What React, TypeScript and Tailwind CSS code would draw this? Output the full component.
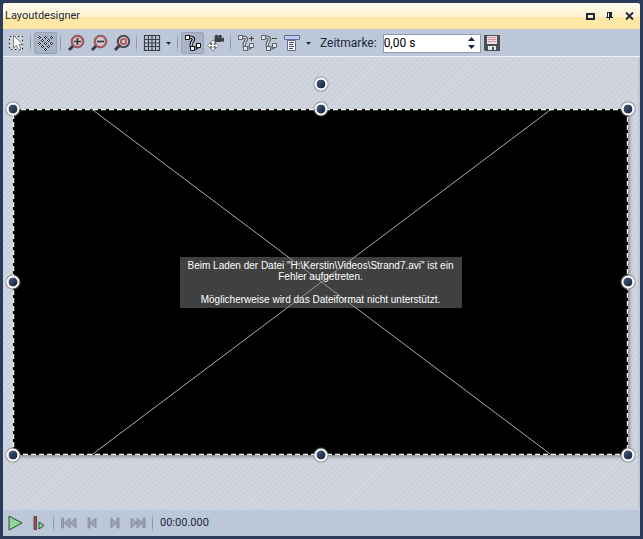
import type { ReactNode } from "react";

function Sep() {
  return <span className="mx-[3px] h-5 w-px shrink-0 bg-gradient-to-b from-[#bcc7d8] via-[#7d899c] to-[#bcc7d8]" />;
}

function ToolButton({ label, active, children }: { label: string; active?: boolean; children: ReactNode }) {
  return (
    <button
      type="button"
      aria-label={label}
      aria-pressed={active}
      className={
        active
          ? "flex h-[22px] w-[23px] shrink-0 items-center justify-center rounded-xs border border-[#98a3b6] bg-[#a9b5c7]"
          : "flex h-[22px] w-[23px] shrink-0 items-center justify-center rounded-xs hover:bg-[#cdd6e3]"
      }
    >
      {children}
    </button>
  );
}

function Icon({ children }: { children: ReactNode }) {
  return (
    <svg width="16" height="16" viewBox="0 0 16 16" fill="none" className="shrink-0 overflow-visible" aria-hidden="true">
      {children}
    </svg>
  );
}

function Caret({ label }: { label: string }) {
  return (
    <button type="button" aria-label={label} className="flex h-5 w-[11px] shrink-0 items-center justify-center">
      <svg width="5" height="3" viewBox="0 0 5 3" aria-hidden="true">
        <path d="M0 0h5L2.5 3z" fill="#1b2940" />
      </svg>
    </button>
  );
}

function Magnifier({ children }: { children: ReactNode }) {
  return (
    <Icon>
      <path d="M5.5 10.500 1 15" stroke="#3b3b40" strokeWidth="3" />
      <circle cx="9.500" cy="6.500" r="6.300" fill="#c9cdd6" stroke="#55545a" strokeWidth="1" />
      <circle cx="9.500" cy="6.500" r="5.300" stroke="#c05058" strokeWidth="1.700" />
      {children}
    </Icon>
  );
}

function CurvePath({ muted }: { muted?: boolean }) {
  const ink = muted ? "#5e5f64" : "#111";
  const fill = muted ? "#e4e6ea" : "#f8f8f8";
  const curve = "M3 2.500C7 1.500 9.500 3 8 5.500S5 9 7 13M8 13.500c3 0 5-1 5.500-3.500";
  return (
    <>
      <path d={curve} stroke={ink} strokeWidth="3.400" />
      <path d={curve} stroke="#cdd2da" strokeWidth="1.200" />
      <path d="M.5.5h4v4h-4zM5.500 11.500h4v4h-4zM11.500 8.500h4v4h-4z" fill={fill} stroke={ink} />
    </>
  );
}

function Dots() {
  const dots = [[1, 2], [4, 5], [7, 8], [10, 5], [13, 2], [7, 2], [1, 8], [4, 11], [7, 14], [10, 11], [13, 8]];
  return (
    <svg width="15" height="16" viewBox="0 0 15 16" shapeRendering="crispEdges" aria-hidden="true">
      {dots.map(([x, y]) => (
        <g key={`${x}-${y}`}>
          <path d={`M${x} ${y - 1}h1v3h-1zM${x - 1} ${y}h3v1h-3z`} fill="#1a1a1a" />
          <path d={`M${x} ${y}h1v1h-1z`} fill="#fff" />
        </g>
      ))}
    </svg>
  );
}

function Handle({ place }: { place: string }) {
  return (
    <span
      className={`absolute size-[13px] -translate-x-1/2 -translate-y-1/2 rounded-full border-2 border-white bg-gradient-to-br from-[#4a5d80] to-[#14213b] shadow-[0_0_1px_1px_#777b] ${place}`}
    />
  );
}

function Transport({ label, children }: { label: string; children: ReactNode }) {
  return (
    <button type="button" disabled aria-label={label} className="flex h-5 w-[23px] items-center justify-center">
      <svg width="16" height="12" viewBox="0 0 16 12" fill="#9aa3b1" stroke="#838c9b" strokeWidth="0.800" aria-hidden="true">
        {children}
      </svg>
    </button>
  );
}

export default function App() {
  return (
    <div className="flex min-h-screen flex-col bg-[#2b3b5b] p-[3px] font-['Roboto','Open_Sans',sans-serif] text-[11px] text-[#1b2940]">
      <header className="flex h-[26px] items-center rounded-t-xs bg-[linear-gradient(#fffbee_0px,#fff2cf_14px,#ffe8a6_14px)] pr-1.5 pl-0.5">
        <h1 className="flex-1">Layoutdesigner</h1>
        <div className="flex items-center gap-[11px]">
          <button type="button" aria-label="Maximieren">
            <svg width="9" height="7" viewBox="0 0 9 7" aria-hidden="true"><path d="M1 1h7v5H1z" fill="none" stroke="#1b2940" strokeWidth="2" /></svg>
          </button>
          <button type="button" aria-label="Anheften">
            <svg width="8" height="8" viewBox="0 0 8 8" fill="#1b2940" aria-hidden="true"><path d="M1 0h5v5h1v1H4v2H3V6H0V5h1zM2 1v4h1V1z" fillRule="evenodd" /></svg>
          </button>
          <button type="button" aria-label="Schließen">
            <svg width="9" height="8" viewBox="0 0 9 8" aria-hidden="true"><path d="M1 0.500l7 7M8 0.500l-7 7" stroke="#1b2940" strokeWidth="2" /></svg>
          </button>
        </div>
      </header>

      <div role="toolbar" aria-label="Werkzeuge" className="flex h-7 items-center border-b border-[#f0f4fa] bg-[#bcc7d8] pt-px pl-px">
        <ToolButton label="Auswahl">
          <Icon>
            <path d="M1.500 1.500h13v13h-13z" fill="#cfd5df" stroke="#fff" />
            <path d="M1.500 1.500h13v13h-13z" stroke="#222" strokeDasharray="2 2" />
            <path d="M5.500.5v12.500l3-2.500 2 4.500 2.500-1-2-4.500h4z" fill="#fff" stroke="#666" strokeWidth="0.800" />
          </Icon>
        </ToolButton>
        <Sep />
        <ToolButton label="Punkte" active><Dots /></ToolButton>
        <Sep />
        <ToolButton label="Vergrößern"><Magnifier><path d="M6 6.500h7M9.500 3v7" stroke="#333" strokeWidth="1.700" /></Magnifier></ToolButton>
        <ToolButton label="Verkleinern"><Magnifier><path d="M6 6.500h7" stroke="#333" strokeWidth="1.700" /></Magnifier></ToolButton>
        <ToolButton label="Einpassen">
          <Icon>
            <path d="M5.500 10.500 1 15" stroke="#3b3b40" strokeWidth="3" />
            <circle cx="9.500" cy="6.500" r="5.700" fill="#c9cdd6" stroke="#4b4b51" strokeWidth="2" />
            <circle cx="9.500" cy="6.500" r="2.700" stroke="#c05058" strokeWidth="1.800" />
          </Icon>
        </ToolButton>
        <Sep />
        <ToolButton label="Raster">
          <Icon><path d="M.5.5h15v15H.5zM4.500 0v16M8 0v16M11.500 0v16M0 4.500h16M0 8h16M0 11.500h16" stroke="#3c3f47" strokeWidth="1.200" /></Icon>
        </ToolButton>
        <Caret label="Rasteroptionen" />
        <Sep />
        <ToolButton label="Pfad" active><Icon><CurvePath /></Icon></ToolButton>
        <ToolButton label="Kamera">
          <Icon>
            <circle cx="8.500" cy="1.500" r="1.800" fill="#3b3d42" />
            <circle cx="12" cy="1.500" r="1.800" fill="#3b3d42" />
            <path d="M6.500 2.500h7v1l2.500-1v4.500l-2.500-1v1h-7z" fill="#3b3d42" />
            <path d="M5 5 8 8H6v1.500h1.500v-2l3 3-3 3v-2H6V13h2l-3 3-3-3h2v-1.500H2.500v2l-3-3 3-3v2H4V8H2z" fill="#fff" stroke="#66676b" strokeWidth="0.800" />
          </Icon>
        </ToolButton>
        <Sep />
        <ToolButton label="Punkt hinzufügen"><Icon><CurvePath muted /><path d="M11 3.500h5M13.500 1v5" stroke="#444" /></Icon></ToolButton>
        <ToolButton label="Punkt entfernen"><Icon><CurvePath muted /><path d="M11 3.500h5" stroke="#444" /></Icon></ToolButton>
        <ToolButton label="Ausrichten">
          <Icon>
            <path d="M.5.5h15v4H.5z" fill="#b8cdf0" stroke="#66689e" />
            <path d="M3.500 5.500h8v10h-8z" fill="#fff" stroke="#66689e" />
            <path d="M5 7.500h5M5 9.500h4M5 11.500h5M5 13.500h4" stroke="#44467e" />
          </Icon>
        </ToolButton>
        <Caret label="Ausrichtungsoptionen" />
        <label htmlFor="time" className="mr-1.5 ml-1.5 text-[12px]">Zeitmarke:</label>
        <div className="flex h-[19px] w-[98px] border border-[#8e9bb0] bg-white">
          <input id="time" defaultValue="0,00 s" className="w-full min-w-0 flex-1 bg-white text-[12px] text-black outline-none" />
          <div className="flex w-4 flex-col items-center justify-center gap-1">
            <button type="button" aria-label="Erhöhen"><svg className="block" width="7" height="4" viewBox="0 0 7 4" aria-hidden="true"><path d="M0 4h7L3.500 0z" fill="#1b2940" /></svg></button>
            <button type="button" aria-label="Verringern"><svg className="block" width="7" height="4" viewBox="0 0 7 4" aria-hidden="true"><path d="M0 0h7L3.500 4z" fill="#1b2940" /></svg></button>
          </div>
        </div>
        <ToolButton label="Speichern">
          <Icon>
            <path d="M0 0h16v16H1l-1-1z" fill="#4c4e56" />
            <path d="M3 1h10v8H3z" fill="#f0dde1" />
            <path d="M4 2.500h8M4 4.500h8M4 6.500h8" stroke="#d08f9b" />
            <path d="M4 11h8v4H4z" fill="#e2e7ec" /><path d="M8 12h2v3H8z" fill="#4c4e56" />
          </Icon>
        </ToolButton>
      </div>

      <main className="flex flex-1 flex-col border-r-2 border-[#bcc7d8] bg-[repeating-linear-gradient(135deg,#d1d6df_0px,#d1d6df_2px,#c6cdd6_3px,#d1d6df_4px)] px-2.5 py-[52px]">
        <div className="relative flex aspect-[615/346] w-full items-center justify-center bg-black shadow-[2px_2px_3px_#5558]">
          <svg className="absolute inset-0 size-full" viewBox="0 0 615 346" fill="none" aria-hidden="true">
            <path d="M78.500 0 538.500 346M538.500 0 78.500 346" stroke="#d8d8d8" strokeWidth="0.800" />
            <path d="M0 .5h615M614.500 0v346M615 345.500H0M.5 346V0" stroke="#fff" strokeWidth="1.400" strokeDasharray="5 3" />
          </svg>
          <div className="relative flex w-[282px] flex-col gap-3 bg-[#808080]/50 px-2 py-[3px] text-center font-['Liberation_Sans',sans-serif] text-[10px] leading-[11px] text-white">
            <p>Beim Laden der Datei "H:\Kerstin\Videos\Strand7.avi" ist ein Fehler aufgetreten.</p>
            <p>Möglicherweise wird das Dateiformat nicht unterstützt.</p>
          </div>
          <Handle place="left-1/2 -top-[25px]" />
          <Handle place="left-0 top-0" />
          <Handle place="left-1/2 top-0" />
          <Handle place="left-full top-0" />
          <Handle place="left-0 top-1/2" />
          <Handle place="left-full top-1/2" />
          <Handle place="left-0 top-full" />
          <Handle place="left-1/2 top-full" />
          <Handle place="left-full top-full" />
        </div>
      </main>

      <footer className="flex h-7 items-center border-t-2 border-[#c9d3e2] bg-[#bcc7d8] pl-px">
        <button type="button" aria-label="Wiedergabe" className="flex h-5 w-[23px] items-center justify-center">
          <svg width="15" height="16" viewBox="0 0 15 16" aria-hidden="true"><path d="M1 1v14L14 8z" fill="#8fd694" stroke="#2f4a38" /></svg>
        </button>
        <button type="button" aria-label="Ab Marke wiedergeben" className="flex h-5 w-[23px] items-center justify-center">
          <svg width="12" height="14" viewBox="0 0 12 14" aria-hidden="true"><path d="M1 .5h2.500v13H1z" fill="#a94b50" stroke="#5e4448" /><path d="M6 6v7l5-3.500z" fill="#8fd694" stroke="#2f4a38" /></svg>
        </button>
        <Sep />
        <Transport label="Zum Anfang"><path d="M.5 1h2v10h-2zM9 1v10L3 6zM15 1v10L9 6z" /></Transport>
        <Transport label="Bild zurück"><path d="M4 1h2v10H4zM12 1v10L6 6z" /></Transport>
        <Transport label="Bild vor"><path d="M4 1v10l6-5zM10 1h2v10h-2z" /></Transport>
        <Transport label="Zum Ende"><path d="M1 1v10l6-5zM7 1v10l6-5zM13 1h2v10h-2z" /></Transport>
        <Sep />
        <output className="ml-1">00:00.000</output>
      </footer>
    </div>
  );
}
